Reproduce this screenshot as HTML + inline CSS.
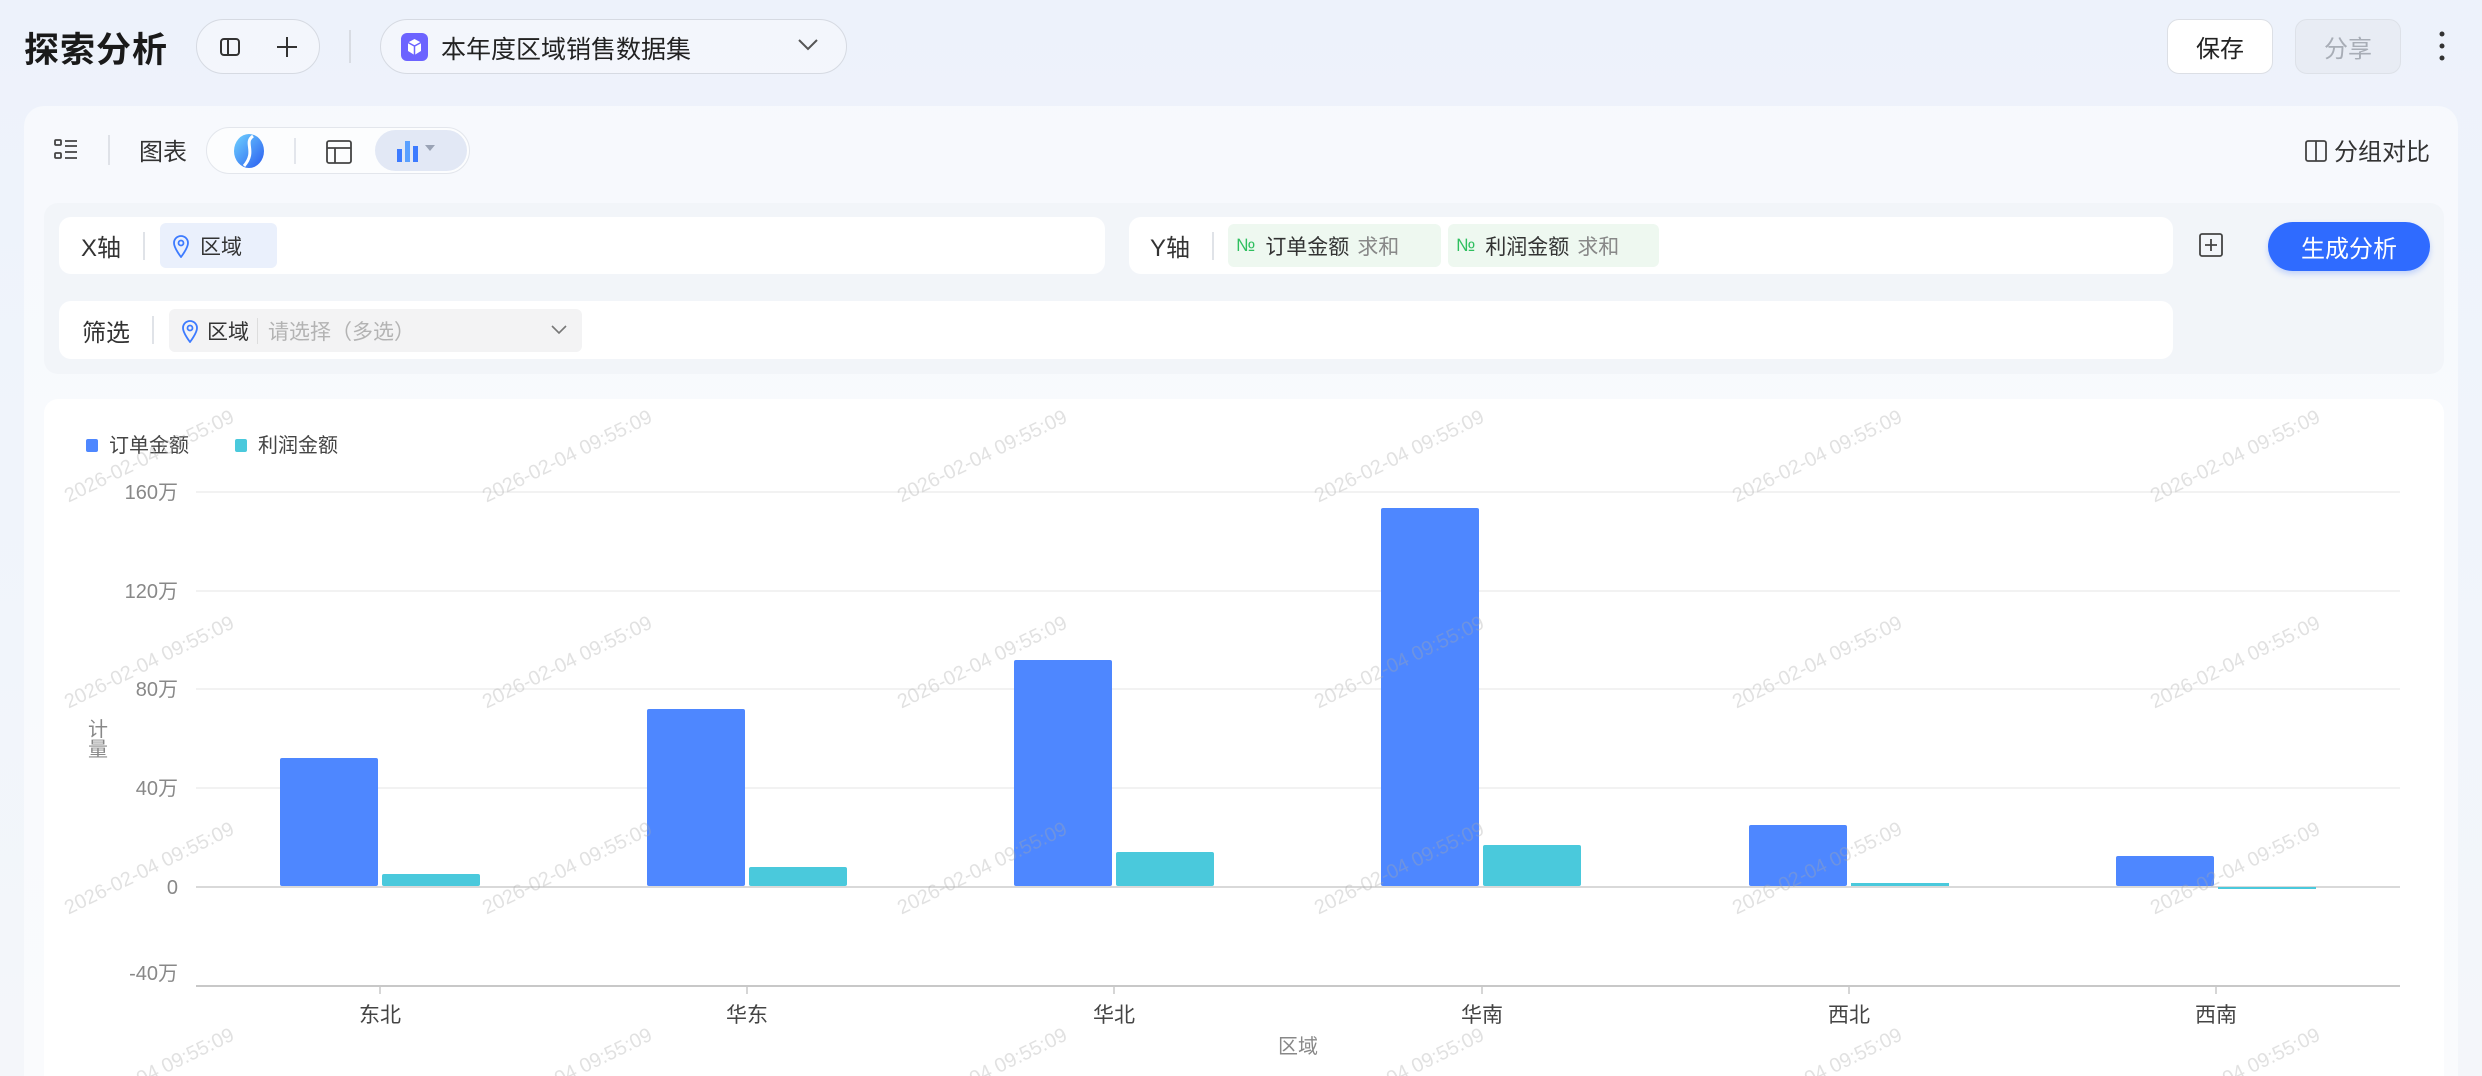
<!DOCTYPE html>
<html><head><meta charset="utf-8"><style>
*{box-sizing:border-box;margin:0;padding:0}
html,body{width:2482px;height:1076px;overflow:hidden}
body{position:relative;font-family:"Liberation Sans","Noto Sans CJK SC",sans-serif;color:#1f2329;background:linear-gradient(180deg,#edf2fb 0%,#f1f5fb 60%,#f4f6fa 100%)}
.a{position:absolute}
.title{left:24px;top:22px;font-size:35px;font-weight:bold;color:#1a1a1a;letter-spacing:1px}
.pill{border:1.5px solid #d6dae2;border-radius:28px;background:rgba(255,255,255,0.35)}
.btn{border-radius:12px;font-size:24px;display:flex;align-items:center;justify-content:center}
.box{background:#fff;border-radius:12px}
.lbl{font-size:24px;color:#333}
.tag{border-radius:6px;display:flex;align-items:center;font-size:21px}
</style></head><body>
<div class="a title">探索分析</div>
<div class="a pill" style="left:196px;top:19px;width:124px;height:55px"></div>
<svg class="a" style="left:219px;top:36px" width="22" height="22" viewBox="0 0 22 22"><rect x="2" y="3" width="18" height="16" rx="3" fill="none" stroke="#333" stroke-width="2"/><line x1="9" y1="3" x2="9" y2="19" stroke="#333" stroke-width="2"/></svg>
<svg class="a" style="left:275px;top:35px" width="24" height="24" viewBox="0 0 24 24"><path d="M12 2V22M2 12H22" stroke="#333" stroke-width="2"/></svg>
<div class="a" style="left:349px;top:30px;width:1.5px;height:33px;background:#d8dce3"></div>
<div class="a pill" style="left:380px;top:19px;width:467px;height:55px"></div>
<div class="a" style="left:401px;top:33px;width:27px;height:28px;border-radius:6px;background:#6c63ff"></div>
<svg class="a" style="left:406px;top:38px" width="17" height="18" viewBox="0 0 17 18"><path d="M8.5 1L15 4.5V13L8.5 17L2 13V4.5Z" fill="#fff"/><path d="M2 4.5L8.5 8L15 4.5M8.5 8V17" stroke="#6c63ff" stroke-width="1.5" fill="none"/></svg>
<div class="a" style="left:441px;top:30px;font-size:25px;color:#222">本年度区域销售数据集</div>
<svg class="a" style="left:797px;top:38px" width="22" height="14" viewBox="0 0 22 14"><path d="M2 2L11 11L20 2" stroke="#555" stroke-width="2" fill="none"/></svg>
<div class="a btn" style="left:2167px;top:19px;width:106px;height:55px;background:#fff;border:1.5px solid #dcdfe5;color:#222">保存</div>
<div class="a btn" style="left:2295px;top:19px;width:106px;height:55px;background:#e8ecf4;border:1.5px solid #dde1e8;color:#a8adb6">分享</div>
<svg class="a" style="left:2436px;top:30px" width="12" height="32" viewBox="0 0 12 32"><circle cx="6" cy="4" r="2.5" fill="#333"/><circle cx="6" cy="16" r="2.5" fill="#333"/><circle cx="6" cy="28" r="2.5" fill="#333"/></svg>

<div class="a" style="left:24px;top:106px;width:2434px;height:970px;border-radius:20px 20px 0 0;background:rgba(255,255,255,0.5)"></div>
<svg class="a" style="left:54px;top:138px" width="24" height="24" viewBox="0 0 24 24" fill="none" stroke="#444" stroke-width="1.8"><rect x="1" y="2" width="6" height="5" rx="1"/><rect x="1" y="15" width="6" height="5" rx="1"/><path d="M11 3H23M11 8H23M11 14H23M11 20H23"/></svg>
<div class="a" style="left:108px;top:135px;width:1.5px;height:30px;background:#dfe2e8"></div>
<div class="a lbl" style="left:139px;top:132px;color:#333">图表</div>
<div class="a" style="left:206px;top:127px;width:264px;height:47px;border:1.5px solid #e3e6ec;border-radius:24px;background:rgba(255,255,255,0.6)"></div>
<svg class="a" style="left:231px;top:133px" width="36" height="36" viewBox="0 0 36 36"><defs><linearGradient id="g1" x1="0" y1="0" x2="1" y2="1"><stop offset="0" stop-color="#6fd3ff"/><stop offset="1" stop-color="#2a5cf0"/></linearGradient></defs><ellipse cx="18" cy="18" rx="15" ry="17" fill="url(#g1)"/><path d="M22 3C12 10 26 18 13 33" stroke="#fff" stroke-width="3" fill="none"/></svg>
<div class="a" style="left:294px;top:138px;width:1.5px;height:26px;background:#e3e6ec"></div>
<svg class="a" style="left:326px;top:140px" width="26" height="24" viewBox="0 0 26 24" fill="none" stroke="#444" stroke-width="1.8"><rect x="1" y="1" width="24" height="22" rx="2"/><path d="M1 8H25M9 8V23"/></svg>
<div class="a" style="left:375px;top:130px;width:92px;height:41px;border-radius:21px;background:#e2e8f5"></div>
<svg class="a" style="left:397px;top:139px" width="48" height="24" viewBox="0 0 48 24"><rect x="0" y="10" width="5" height="13" fill="#3d7bff"/><rect x="8" y="2" width="5" height="21" fill="#5aa0ff"/><rect x="16" y="7" width="5" height="16" fill="#3d7bff"/><path d="M28 6H38L33 12Z" fill="#9aa3b5"/></svg>
<svg class="a" style="left:2305px;top:139px" width="22" height="24" viewBox="0 0 22 24" fill="none" stroke="#444" stroke-width="1.8"><rect x="1" y="2" width="20" height="20" rx="2"/><path d="M11 2V22"/></svg>
<div class="a lbl" style="left:2334px;top:132px;color:#333">分组对比</div>

<div class="a" style="left:44px;top:203px;width:2400px;height:171px;border-radius:14px;background:#f2f5f9"></div>
<div class="a box" style="left:59px;top:217px;width:1046px;height:57px"></div>
<div class="a lbl" style="left:81px;top:228px">X轴</div>
<div class="a" style="left:143px;top:232px;width:1.5px;height:28px;background:#e0e3e8"></div>
<div class="a tag" style="left:160px;top:223px;width:117px;height:45px;background:#eaf0fc;color:#333;padding-left:12px">
<svg width="18" height="24" viewBox="0 0 18 24" fill="none" stroke="#3d7bff" stroke-width="1.8"><path d="M9 23C9 23 2 14 2 9A7 7 0 0 1 16 9C16 14 9 23 9 23Z"/><circle cx="9" cy="9" r="2.5"/></svg><span style="margin-left:10px">区域</span></div>
<div class="a box" style="left:1129px;top:217px;width:1044px;height:57px"></div>
<div class="a lbl" style="left:1150px;top:228px">Y轴</div>
<div class="a" style="left:1212px;top:232px;width:1.5px;height:28px;background:#e0e3e8"></div>
<div class="a tag" style="left:1228px;top:224px;width:213px;height:43px;background:#eef8f0;padding-left:8px"><span style="color:#2fbf5f;font-size:18px">№</span><span style="margin-left:10px;color:#333">订单金额</span><span style="margin-left:8px;color:#888">求和</span></div>
<div class="a tag" style="left:1448px;top:224px;width:211px;height:43px;background:#eef8f0;padding-left:8px"><span style="color:#2fbf5f;font-size:18px">№</span><span style="margin-left:10px;color:#333">利润金额</span><span style="margin-left:8px;color:#888">求和</span></div>
<svg class="a" style="left:2199px;top:233px" width="24" height="24" viewBox="0 0 24 24" fill="none" stroke="#444" stroke-width="1.8"><rect x="1" y="1" width="22" height="22" rx="2"/><path d="M12 6V18M6 12H18"/></svg>
<div class="a btn" style="left:2268px;top:222px;width:162px;height:49px;border-radius:25px;background:#2f6bff;color:#fff;box-shadow:0 3px 6px rgba(47,107,255,0.25)">生成分析</div>
<div class="a box" style="left:59px;top:301px;width:2114px;height:58px"></div>
<div class="a lbl" style="left:82px;top:313px">筛选</div>
<div class="a" style="left:152px;top:316px;width:1.5px;height:28px;background:#e0e3e8"></div>
<div class="a tag" style="left:169px;top:309px;width:413px;height:43px;background:#f3f3f4;padding-left:12px">
<svg width="18" height="24" viewBox="0 0 18 24" fill="none" stroke="#3d7bff" stroke-width="1.8"><path d="M9 23C9 23 2 14 2 9A7 7 0 0 1 16 9C16 14 9 23 9 23Z"/><circle cx="9" cy="9" r="2.5"/></svg><span style="margin-left:8px;color:#333">区域</span><span style="margin-left:8px;width:1px;height:26px;background:#ddd"></span><span style="margin-left:10px;color:#b3b3b3">请选择（多选）</span></div>
<svg class="a" style="left:551px;top:325px" width="16" height="10" viewBox="0 0 16 10"><path d="M1 1L8 8L15 1" stroke="#777" stroke-width="1.6" fill="none"/></svg>

<div class="a" style="left:44px;top:399px;width:2400px;height:677px;border-radius:14px 14px 0 0;background:#fff"></div>
<svg class="a" style="left:0;top:0" width="2482" height="1076" viewBox="0 0 2482 1076" font-family="Liberation Sans,Noto Sans CJK SC,sans-serif">
<rect x="86" y="439" width="12" height="13" rx="2" fill="#4e87ff"/><text x="109" y="452" font-size="20" fill="#444">订单金额</text>
<rect x="235" y="439" width="12" height="13" rx="2" fill="#4ac9dc"/><text x="258" y="452" font-size="20" fill="#444">利润金额</text>
<g stroke="#eeeeee" stroke-width="1.5"><line x1="196" y1="492" x2="2400" y2="492"/><line x1="196" y1="591" x2="2400" y2="591"/><line x1="196" y1="689" x2="2400" y2="689"/><line x1="196" y1="788" x2="2400" y2="788"/></g>
<line x1="196" y1="887" x2="2400" y2="887" stroke="#d9d9d9" stroke-width="2"/>
<line x1="196" y1="986" x2="2400" y2="986" stroke="#c8c8c8" stroke-width="2"/>
<g font-size="20" fill="#888" text-anchor="end"><text x="178" y="499">160万</text><text x="178" y="598">120万</text><text x="178" y="696">80万</text><text x="178" y="795">40万</text><text x="178" y="894">0</text><text x="178" y="980">-40万</text></g>
<text x="98" y="736" font-size="20" fill="#888" text-anchor="middle">计</text><text x="98" y="756" font-size="20" fill="#888" text-anchor="middle">量</text>
<g fill="#4e87ff">
<rect x="280" y="758" width="98" height="128" rx="2"/><rect x="647" y="709" width="98" height="177" rx="2"/><rect x="1014" y="660" width="98" height="226" rx="2"/><rect x="1381" y="508" width="98" height="378" rx="2"/><rect x="1749" y="825" width="98" height="61" rx="2"/><rect x="2116" y="856" width="98" height="30" rx="2"/></g>
<g fill="#4ac9dc">
<rect x="382" y="874" width="98" height="12" rx="2"/><rect x="749" y="867" width="98" height="19" rx="2"/><rect x="1116" y="852" width="98" height="34" rx="2"/><rect x="1483" y="845" width="98" height="41" rx="2"/><rect x="1851" y="883" width="98" height="3"/><rect x="2218" y="887" width="98" height="2"/></g>
<g stroke="#c8c8c8" stroke-width="1.5"><line x1="380" y1="986" x2="380" y2="994"/><line x1="747" y1="986" x2="747" y2="994"/><line x1="1114" y1="986" x2="1114" y2="994"/><line x1="1482" y1="986" x2="1482" y2="994"/><line x1="1849" y1="986" x2="1849" y2="994"/><line x1="2216" y1="986" x2="2216" y2="994"/></g>
<g font-size="21" fill="#444" text-anchor="middle"><text x="380" y="1022">东北</text><text x="747" y="1022">华东</text><text x="1114" y="1022">华北</text><text x="1482" y="1022">华南</text><text x="1849" y="1022">西北</text><text x="2216" y="1022">西南</text></g>
<text x="1298" y="1053" font-size="20" fill="#888" text-anchor="middle">区域</text>
<g font-size="20" fill="rgba(170,170,170,0.35)" text-anchor="middle">
<text transform="translate(152,462) rotate(-26)">2026-02-04 09:55:09</text><text transform="translate(570,462) rotate(-26)">2026-02-04 09:55:09</text><text transform="translate(985,462) rotate(-26)">2026-02-04 09:55:09</text><text transform="translate(1402,462) rotate(-26)">2026-02-04 09:55:09</text><text transform="translate(1820,462) rotate(-26)">2026-02-04 09:55:09</text><text transform="translate(2238,462) rotate(-26)">2026-02-04 09:55:09</text>
<text transform="translate(152,668) rotate(-26)">2026-02-04 09:55:09</text><text transform="translate(570,668) rotate(-26)">2026-02-04 09:55:09</text><text transform="translate(985,668) rotate(-26)">2026-02-04 09:55:09</text><text transform="translate(1402,668) rotate(-26)">2026-02-04 09:55:09</text><text transform="translate(1820,668) rotate(-26)">2026-02-04 09:55:09</text><text transform="translate(2238,668) rotate(-26)">2026-02-04 09:55:09</text>
<text transform="translate(152,874) rotate(-26)">2026-02-04 09:55:09</text><text transform="translate(570,874) rotate(-26)">2026-02-04 09:55:09</text><text transform="translate(985,874) rotate(-26)">2026-02-04 09:55:09</text><text transform="translate(1402,874) rotate(-26)">2026-02-04 09:55:09</text><text transform="translate(1820,874) rotate(-26)">2026-02-04 09:55:09</text><text transform="translate(2238,874) rotate(-26)">2026-02-04 09:55:09</text>
<text transform="translate(152,1080) rotate(-26)">2026-02-04 09:55:09</text><text transform="translate(570,1080) rotate(-26)">2026-02-04 09:55:09</text><text transform="translate(985,1080) rotate(-26)">2026-02-04 09:55:09</text><text transform="translate(1402,1080) rotate(-26)">2026-02-04 09:55:09</text><text transform="translate(1820,1080) rotate(-26)">2026-02-04 09:55:09</text><text transform="translate(2238,1080) rotate(-26)">2026-02-04 09:55:09</text>
</g>
</svg>
</body></html>
